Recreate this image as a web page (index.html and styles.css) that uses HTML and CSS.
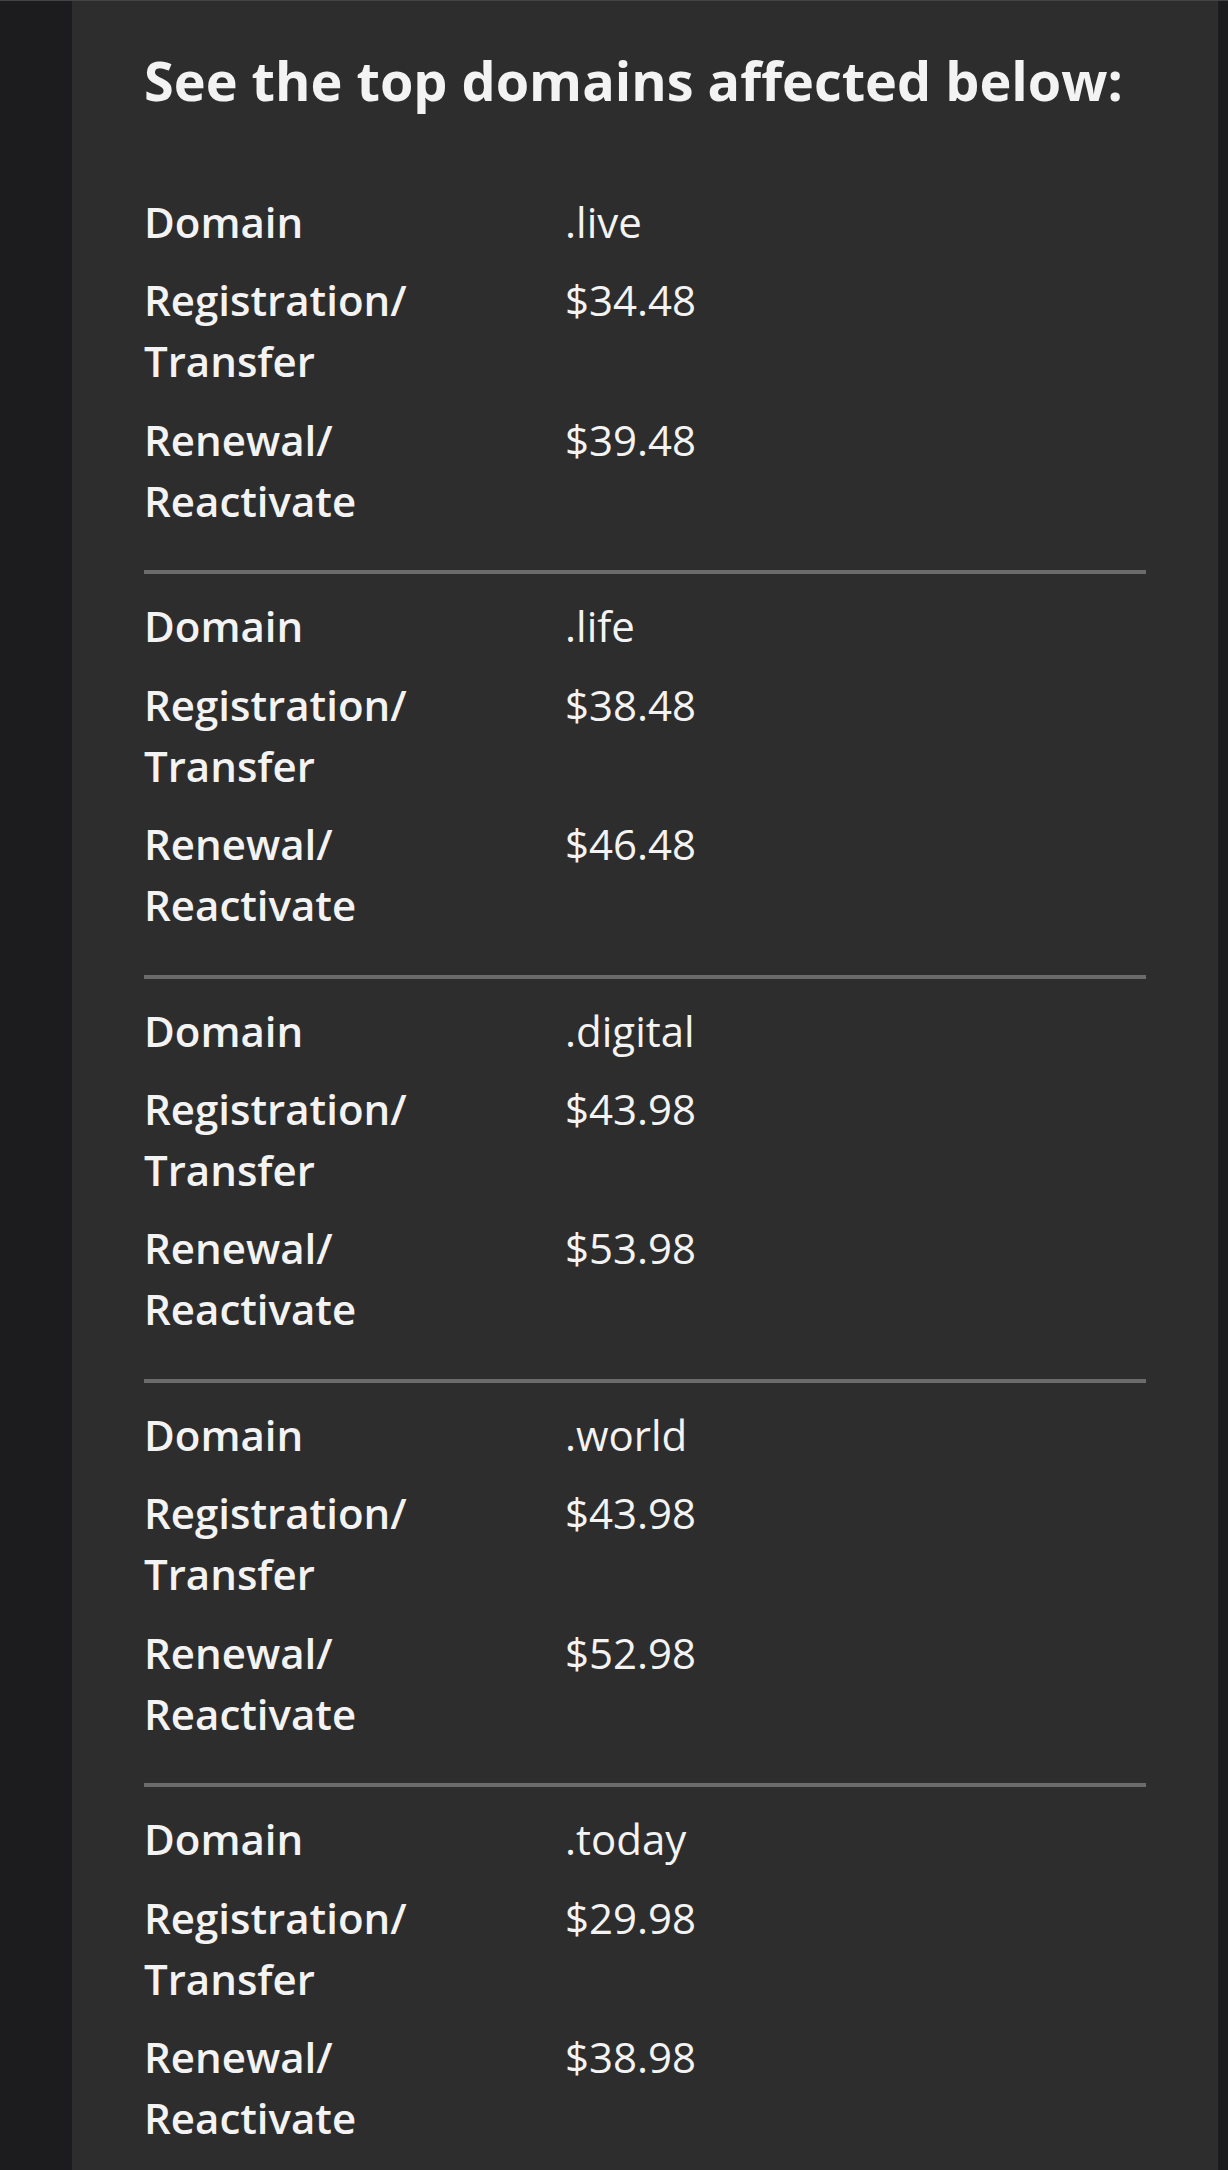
FILE: index.html
```html
<!DOCTYPE html>
<html lang="en">
<head>
<meta charset="utf-8">
<title>Top domains affected</title>
<link rel="stylesheet" href="styles.css">
</head>
<body>
<div class="page">
  <aside class="rail rail-left"></aside>
  <main class="main">
    <h2 class="title">See the top domains affected below:</h2>
    <section class="group">
      <div class="row"><div class="label">Domain</div><div class="value">.live</div></div>
      <div class="row"><div class="label">Registration/<br>Transfer</div><div class="value">$34.48</div></div>
      <div class="row"><div class="label">Renewal/<br>Reactivate</div><div class="value">$39.48</div></div>
    </section>
    <section class="group">
      <div class="row"><div class="label">Domain</div><div class="value">.life</div></div>
      <div class="row"><div class="label">Registration/<br>Transfer</div><div class="value">$38.48</div></div>
      <div class="row"><div class="label">Renewal/<br>Reactivate</div><div class="value">$46.48</div></div>
    </section>
    <section class="group">
      <div class="row"><div class="label">Domain</div><div class="value">.digital</div></div>
      <div class="row"><div class="label">Registration/<br>Transfer</div><div class="value">$43.98</div></div>
      <div class="row"><div class="label">Renewal/<br>Reactivate</div><div class="value">$53.98</div></div>
    </section>
    <section class="group">
      <div class="row"><div class="label">Domain</div><div class="value">.world</div></div>
      <div class="row"><div class="label">Registration/<br>Transfer</div><div class="value">$43.98</div></div>
      <div class="row"><div class="label">Renewal/<br>Reactivate</div><div class="value">$52.98</div></div>
    </section>
    <section class="group">
      <div class="row"><div class="label">Domain</div><div class="value">.today</div></div>
      <div class="row"><div class="label">Registration/<br>Transfer</div><div class="value">$29.98</div></div>
      <div class="row"><div class="label">Renewal/<br>Reactivate</div><div class="value">$38.98</div></div>
    </section>
  </main>
  <aside class="rail rail-right"></aside>
</div>
</body>
</html>
```

FILE: styles.css
```css
html, body {
  margin: 0;
  padding: 0;
  background: #2d2d2d;
}

body {
  font-family: "Open Sans", "Noto Sans", "Liberation Sans", sans-serif;
  color: #f3f3f3;
  border-top: 1px solid #434343;
}

.page {
  display: flex;
  min-height: 2169px;
}

.rail {
  background: #1c1c1e;
  flex: none;
}

.rail-left {
  width: 72px;
}

.rail-right {
  width: 10px;
}

.main {
  flex: 1;
  background: #2d2d2d;
  padding: 46px 72px 0 72px;
}

.title {
  margin: 0 0 57px 0;
  font-size: 54px;
  line-height: 66px;
  font-weight: 700;
  color: #f3f3f3;
}

.group {
  display: flex;
  flex-direction: column;
  gap: 17.4px;
  padding: 21px 0 39.5px 0;
  border-bottom: 4px solid #6b6b6b;
}

.group:last-child {
  border-bottom: none;
}

.row {
  display: grid;
  grid-template-columns: 421px 1fr;
  font-size: 42px;
  line-height: 61px;
}

.label {
  font-weight: 600;
}

.value {
  font-weight: 400;
}
```
